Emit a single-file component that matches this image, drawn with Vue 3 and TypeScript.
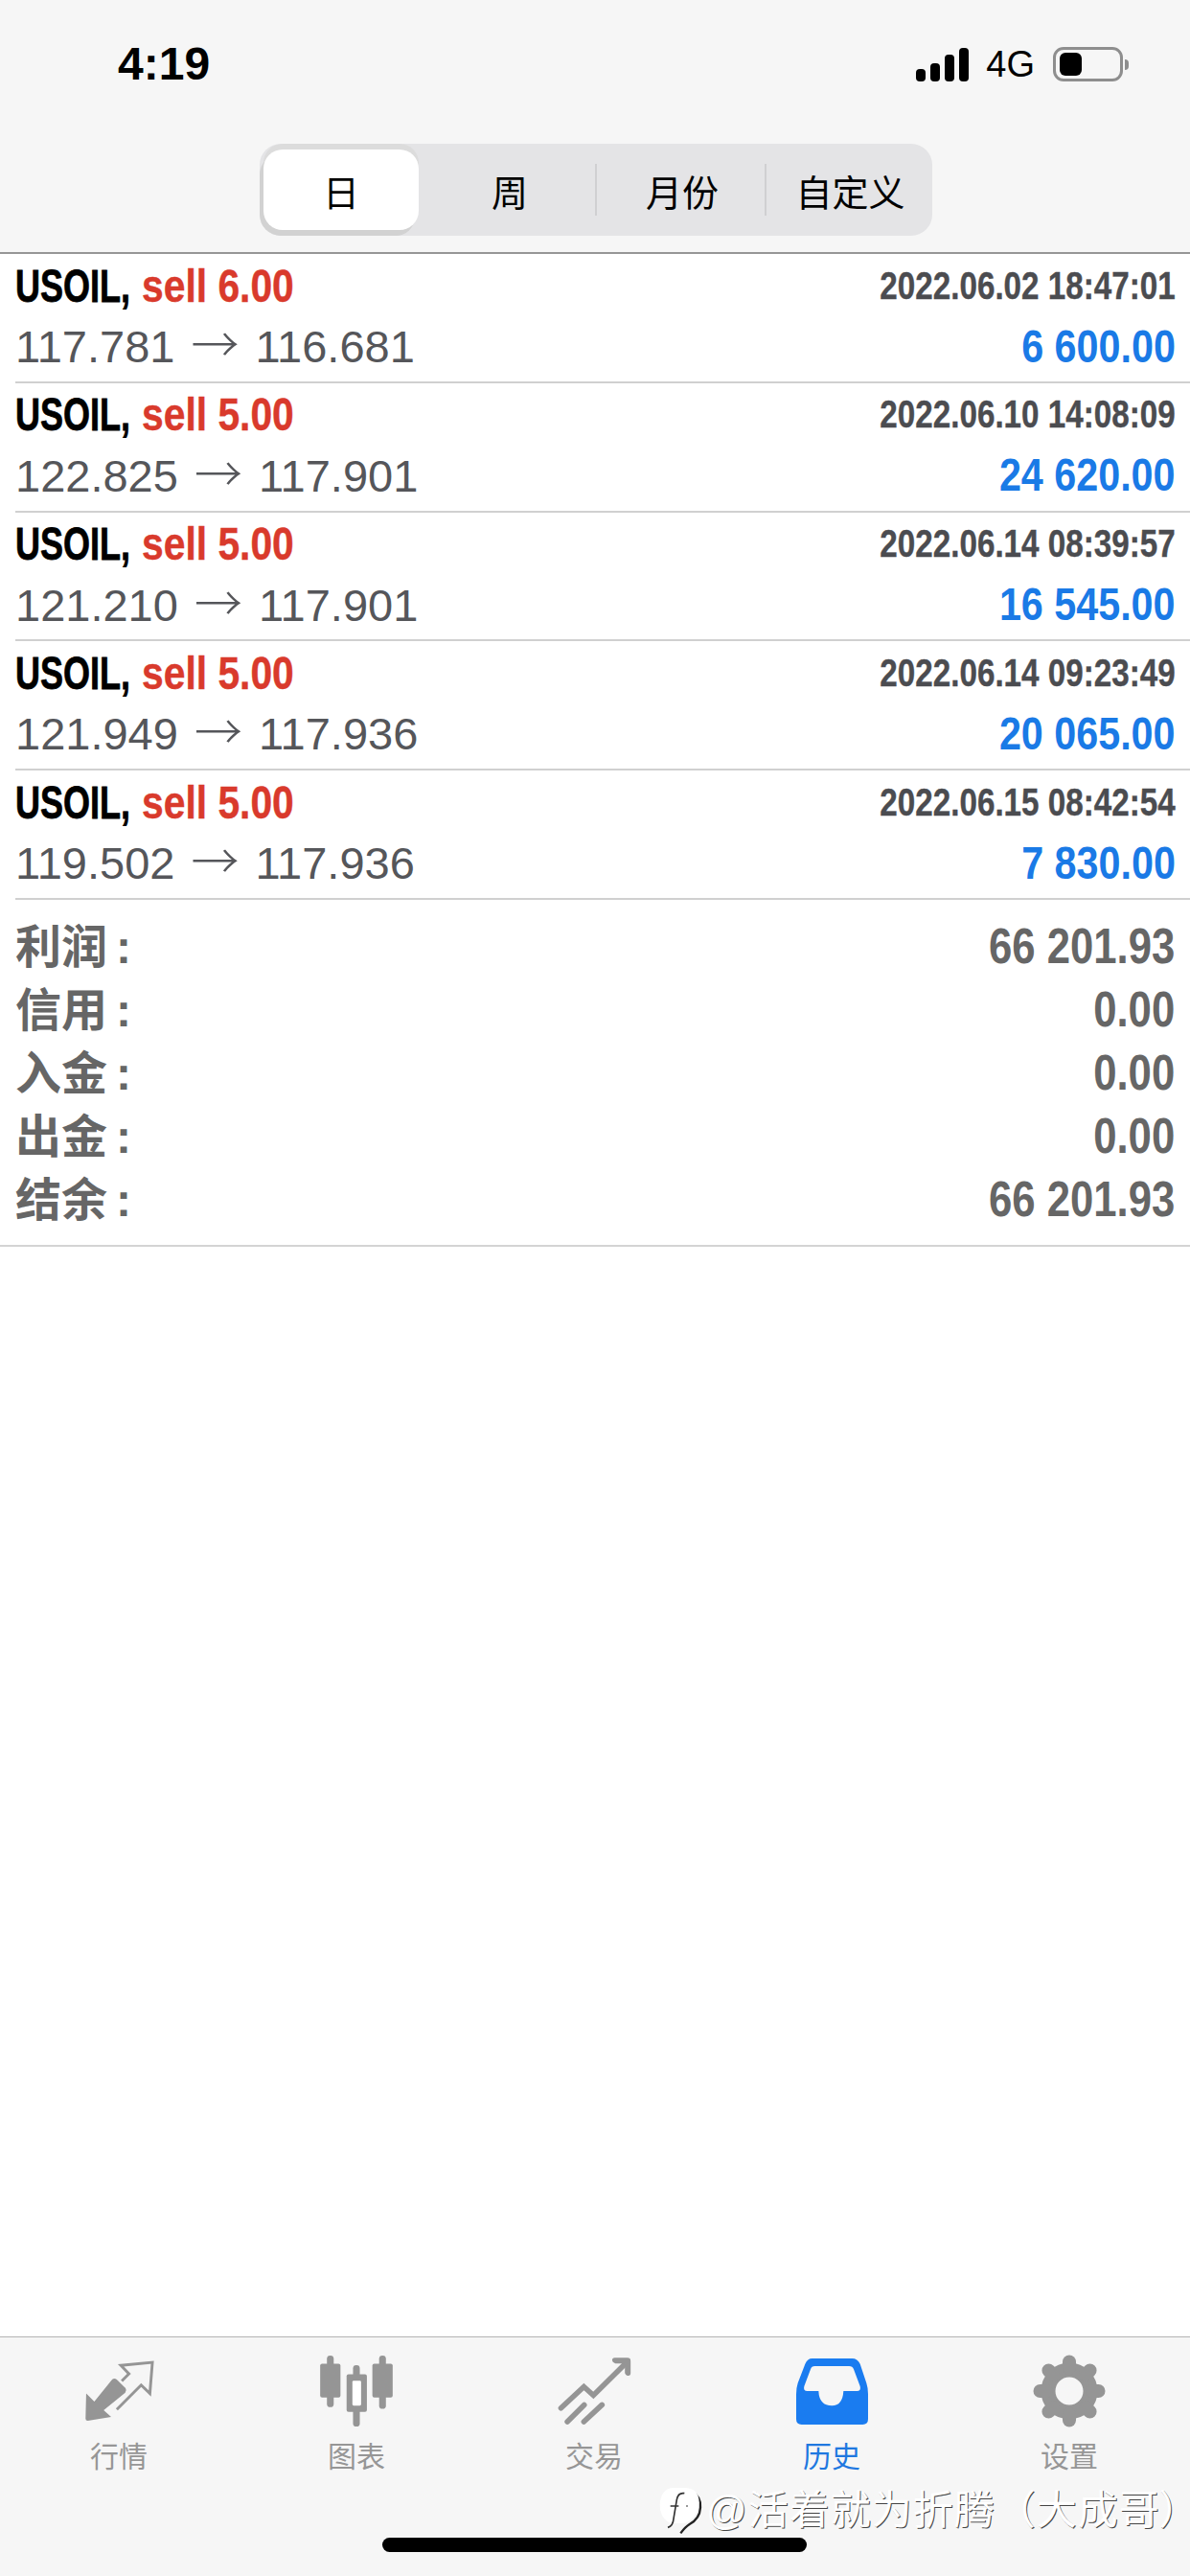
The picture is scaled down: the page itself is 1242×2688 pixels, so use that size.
<script setup lang="ts">
interface Trade {
  symbol: string
  side: string
  time: string
  open: string
  close: string
  profit: string
}

const trades: Trade[] = [
  { symbol: 'USOIL,', side: 'sell 6.00', time: '2022.06.02 18:47:01', open: '117.781', close: '116.681', profit: '6 600.00' },
  { symbol: 'USOIL,', side: 'sell 5.00', time: '2022.06.10 14:08:09', open: '122.825', close: '117.901', profit: '24 620.00' },
  { symbol: 'USOIL,', side: 'sell 5.00', time: '2022.06.14 08:39:57', open: '121.210', close: '117.901', profit: '16 545.00' },
  { symbol: 'USOIL,', side: 'sell 5.00', time: '2022.06.14 09:23:49', open: '121.949', close: '117.936', profit: '20 065.00' },
  { symbol: 'USOIL,', side: 'sell 5.00', time: '2022.06.15 08:42:54', open: '119.502', close: '117.936', profit: '7 830.00' },
]

const totals = [
  { label: '利润', value: '66 201.93' },
  { label: '信用', value: '0.00' },
  { label: '入金', value: '0.00' },
  { label: '出金', value: '0.00' },
  { label: '结余', value: '66 201.93' },
]

const gearTeeth = [0, 45, 90, 135, 180, 225, 270, 315]
</script>

<template>
  <div class="screen">
    <header class="top">
      <div class="status">
        <span class="clock">4:19</span>
        <div class="indicators">
          <div class="signal">
            <i class="b1"></i><i class="b2"></i><i class="b3"></i><i class="b4"></i>
          </div>
          <span class="net">4G</span>
          <div class="battery"><i class="level"></i></div>
          <i class="cap"></i>
        </div>
      </div>
      <div class="segment">
        <span class="cell active c1">日</span>
        <span class="cell c2">周</span>
        <i class="rule"></i>
        <span class="cell c3">月份</span>
        <i class="rule"></i>
        <span class="cell c4">自定义</span>
      </div>
    </header>

    <main class="content">
      <section class="trades">
        <div v-for="t in trades" :key="t.time" class="trade">
          <div class="line one">
            <div class="left">
              <span class="sym"><b class="sym-in">{{ t.symbol }}</b></span>
              <b class="side">{{ t.side }}</b>
            </div>
            <b class="time">{{ t.time }}</b>
          </div>
          <div class="line two">
            <span class="prices">{{ t.open }}<span class="arrow">→</span>{{ t.close }}</span>
            <b class="profit">{{ t.profit }}</b>
          </div>
        </div>
      </section>

      <section class="totals">
        <div v-for="r in totals" :key="r.label" class="total">
          <span class="t-label">{{ r.label }}<span class="colon">:</span></span>
          <b class="t-value">{{ r.value }}</b>
        </div>
      </section>
    </main>

    <footer class="bottom">
      <nav class="tabs">
        <div class="tab">
          <div class="ico">
            <svg width="73" height="64" viewBox="46 54 224 196">
              <path class="fill" d="M52 160 L78 186 L135 115 Q142 109 150 115 L178 143 Q183 150 177 157 L108 213 L132 235 L57 247 Q50 247 50 240 Z" />
              <path class="hollow" d="M166 120 L189 97 L163 70 L264 60 L256 160 L228 133 L150 211" />
            </svg>
          </div>
          <span class="name">行情</span>
        </div>
        <div class="tab">
          <div class="ico">
            <svg width="76" height="74" viewBox="795 40 225 220">
              <rect class="fill" x="816" y="40" width="21" height="160" rx="10" />
              <rect class="fill" x="795" y="65" width="63" height="105" rx="6" />
              <rect class="fill" x="897" y="70" width="21" height="190" rx="10" />
              <rect class="fill" x="877" y="98" width="63" height="117" rx="6" />
              <rect x="895" y="118" width="27" height="77" rx="4" fill="#fff" />
              <rect class="fill" x="978" y="40" width="21" height="165" rx="10" />
              <rect class="fill" x="957" y="65" width="63" height="105" rx="6" />
            </svg>
          </div>
          <span class="name">图表</span>
        </div>
        <div class="tab">
          <div class="ico">
            <svg width="77" height="71" viewBox="33 43 231 214">
              <path class="thick" d="M43 202 L115 135 L145 162 L240 68" />
              <path class="fill" d="M212 44 H252 Q262 44 262 54 V92 Q262 102 252 100 Q246 98 244 92 V62 H214 Q204 58 204 52 Q204 44 212 44 Z" />
              <path class="thick" d="M63 245 L116 192" />
              <path class="thick" d="M115 245 L172 192" />
            </svg>
          </div>
          <span class="name">交易</span>
        </div>
        <div class="tab on">
          <div class="ico">
            <svg width="75" height="69" viewBox="780 48 225 207">
              <path
                fill="#1a7cf0"
                fill-rule="evenodd"
                d="M830 48 H955 Q972 48 980 65 L1000 125 Q1005 140 1005 160 V238 Q1005 255 988 255 H797 Q780 255 780 238 V160 Q780 140 785 125 L808 65 Q815 48 830 48 Z M838 72 Q828 72 825 82 L805 135 Q801 150 815 150 H850 Q852 196 892 196 Q925 196 928 150 H970 Q984 150 980 135 L960 82 Q956 72 946 72 Z"
              />
            </svg>
          </div>
          <span class="name">历史</span>
        </div>
        <div class="tab">
          <div class="ico">
            <svg width="76" height="76" viewBox="0 0 76 76">
              <circle cx="38" cy="38" r="22" fill="none" stroke="#959595" stroke-width="15" />
              <line
                v-for="a in gearTeeth"
                :key="a"
                x1="38"
                y1="14"
                x2="38"
                y2="7.5"
                stroke="#959595"
                stroke-width="14"
                stroke-linecap="round"
                :transform="`rotate(${a} 38 38)`"
              />
            </svg>
          </div>
          <span class="name">设置</span>
        </div>
      </nav>
      <div class="home"></div>

      <div class="mark">
        <svg width="47" height="52" viewBox="20 25 141 156">
          <path class="mark-shade" d="M125 40 Q155 55 152 90 Q150 125 118 142 Q105 150 90 170" />
          <path fill="#fff" d="M65 28 H105 Q148 30 148 75 Q146 118 105 138 L60 140 Q25 125 25 80 Q28 32 65 28 Z" />
          <path class="mark-line" d="M102 45 Q82 42 78 65 L68 125 Q66 148 50 152 M58 85 H84 M108 85 H112" />
        </svg>
        <span class="mark-text">@活着就为折腾（大成哥<span class="mark-end">）</span></span>
      </div>
    </footer>
  </div>
</template>

<style scoped>
.screen {
  position: relative;
  width: 1242px;
  height: 2688px;
  display: flex;
  flex-direction: column;
  background: #fff;
  overflow: hidden;
  font-family: "Liberation Sans", "Noto Sans CJK SC", sans-serif;
}

/* header */
.top {
  height: 265px;
  box-sizing: border-box;
  flex: none;
  padding-top: 44px;
  background: #f6f6f6;
  border-bottom: 2px solid #969696;
}
.status {
  height: 46px;
  display: flex;
  justify-content: space-between;
  align-items: center;
  padding: 0 64px 0 123px;
}
.clock {
  font-size: 48px;
  line-height: 46px;
  font-weight: 700;
  color: #000;
}
.indicators {
  display: flex;
  align-items: center;
}
.signal {
  display: flex;
  align-items: flex-end;
  gap: 5px;
  height: 35px;
  margin-right: 18px;
}
.signal i {
  width: 10px;
  background: #000;
  border-radius: 4px;
}
.b1 { height: 13px; }
.b2 { height: 19px; }
.b3 { height: 28px; }
.b4 { height: 35px; }
.net {
  font-size: 38px;
  line-height: 46px;
  color: #000;
  margin-right: 19px;
}
.battery {
  width: 73px;
  height: 36px;
  box-sizing: border-box;
  border: 3px solid #8e8e8e;
  border-radius: 11px;
  padding: 3px 4px;
}
.level {
  display: block;
  width: 23px;
  height: 24px;
  background: #000;
  border-radius: 6px;
}
.cap {
  width: 4px;
  height: 11px;
  margin-left: 2px;
  background: #8e8e8e;
  border-radius: 0 6px 6px 0;
}

.segment {
  width: 702px;
  height: 96px;
  box-sizing: border-box;
  margin: 60px 0 0 271px;
  padding: 6px 0 6px 4px;
  display: flex;
  align-items: stretch;
  background: #e4e4e6;
  border-radius: 22px;
  overflow: hidden;
}
.cell {
  display: flex;
  align-items: center;
  justify-content: center;
  box-sizing: border-box;
  font-family: "Noto Sans CJK SC", sans-serif;
  font-size: 38px;
  color: #000;
}
.c1 { width: 162px; }
.c2 { width: 184px; padding-left: 6px; }
.c3 { width: 175px; padding-left: 3px; }
.c4 { width: 173px; padding-left: 2px; }
.active {
  background: #fff;
  border-radius: 20px;
  box-shadow: -4px 6px 0 #d2d2d2, 0 -6px 0 #dcdcdc;
}
.rule {
  width: 2px;
  height: 54px;
  align-self: center;
  background: #d0d0d2;
}

/* trades */
.content {
  flex: 1;
}
.trade {
  height: 134.8px;
  box-sizing: border-box;
  margin-left: 16px;
  padding: 4px 15px 0 0;
  border-bottom: 2px solid #d0d0d0;
}
.line {
  display: flex;
  justify-content: space-between;
  align-items: center;
  white-space: nowrap;
}
.one { height: 58px; }
.two { height: 68px; }
.left {
  display: flex;
  align-items: center;
}
.sym {
  display: block;
  width: 132px;
}
.sym-in {
  display: block;
  font-size: 48px;
  color: #000;
  -webkit-text-stroke: 0.8px #000;
  transform: scaleX(0.75);
  transform-origin: left center;
}
.side {
  display: block;
  font-size: 48px;
  color: #d93a2c;
  -webkit-text-stroke: 0.4px #d93a2c;
  transform: scaleX(0.85);
  transform-origin: left center;
}
.time {
  font-size: 41px;
  color: #4b4c50;
  -webkit-text-stroke: 0.4px #4b4c50;
  transform: scaleX(0.81);
  transform-origin: right center;
}
.prices {
  font-size: 47px;
  color: #55565a;
}
.arrow {
  display: inline-block;
  width: 84px;
  text-align: center;
  font-family: "Noto Sans CJK SC", sans-serif;
  font-size: 50px;
  line-height: 46px;
  font-weight: 300;
}
.profit {
  font-size: 48px;
  color: #1a7ae6;
  transform: scaleX(0.86);
  transform-origin: right center;
}

/* totals */
.totals {
  padding: 15px 16px 15px;
  border-bottom: 2px solid #d4d4d4;
}
.total {
  height: 66px;
  display: flex;
  justify-content: space-between;
  align-items: center;
  color: #666;
}
.t-label {
  font-size: 48px;
  font-weight: 700;
  margin-bottom: 6px;
}
.colon {
  margin-left: 9px;
}
.t-value {
  font-size: 52px;
  transform: scaleX(0.84);
  transform-origin: right center;
}

/* bottom */
.bottom {
  position: relative;
  height: 250px;
  flex: none;
  box-sizing: border-box;
  background: #f6f6f6;
  border-top: 1px solid #b4b4b4;
}
.tabs {
  width: 1240px;
  display: grid;
  grid-template-columns: repeat(5, 1fr);
  padding-top: 18px;
}
.tab {
  display: flex;
  flex-direction: column;
  align-items: center;
  gap: 10px;
  color: #969696;
}
.ico {
  height: 76px;
  display: flex;
  align-items: center;
  justify-content: center;
}
.name {
  font-family: "Noto Sans CJK SC", sans-serif;
  font-size: 30px;
  line-height: 36px;
}
.on {
  color: #1f78e0;
}
.fill {
  fill: #959595;
}
.hollow {
  fill: none;
  stroke: #959595;
  stroke-width: 9;
}
.thick {
  fill: none;
  stroke: #959595;
  stroke-width: 17;
  stroke-linecap: round;
  stroke-linejoin: miter;
}
.home {
  width: 443px;
  height: 15px;
  margin: 69px 0 0 399px;
  background: #000;
  border-radius: 8px;
}
.mark {
  position: absolute;
  left: 687px;
  top: 156px;
  display: flex;
  align-items: flex-start;
  gap: 3px;
  white-space: nowrap;
}
.mark-shade {
  fill: none;
  stroke: #222;
  stroke-width: 7;
}
.mark-line {
  fill: none;
  stroke: #333;
  stroke-width: 5;
}
.mark-text {
  font-family: "Liberation Sans", "Noto Sans CJK SC", sans-serif;
  font-size: 42px;
  line-height: 50px;
  letter-spacing: 1px;
  color: #fff;
  text-shadow: 1px 1px 0 #444;
}
.mark-end {
  font-feature-settings: "palt";
}
</style>
